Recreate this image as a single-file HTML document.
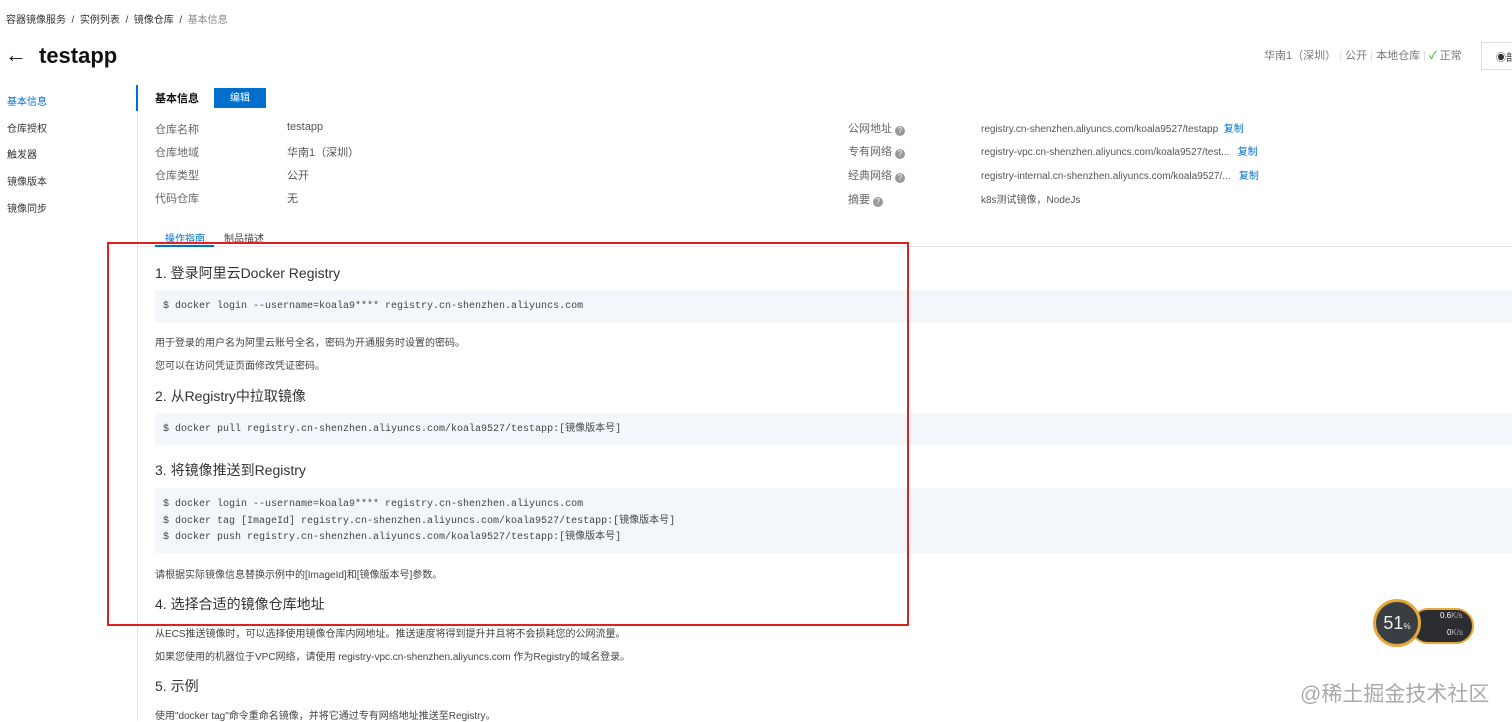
<!DOCTYPE html>
<html><head><meta charset="utf-8"><style>
*{margin:0;padding:0;box-sizing:border-box}
body{width:1512px;height:721px;overflow:hidden;background:#fff;font-family:"Liberation Sans","Noto Sans CJK SC",sans-serif;color:#333;position:relative}
.a{position:absolute;white-space:nowrap}
.g{font-size:11px;color:#555}
.h{font-size:14px;color:#333}
.code{position:absolute;left:155px;right:0;background:#f3f6fb;font-family:"Liberation Mono","Noto Sans CJK SC",monospace;font-size:10px;color:#444;padding-left:8px}
.q{display:inline-block;width:10px;height:10px;border-radius:50%;background:#999;color:#fff;font-size:8px;text-align:center;line-height:10px;vertical-align:-1px;margin-left:3px}
.cp{color:#0070cc}
</style></head><body>
<div class="a" style="left:6px;top:11px;font-size:10px;color:#333">容器镜像服务 &nbsp;/&nbsp; 实例列表 &nbsp;/&nbsp; 镜像仓库 &nbsp;/&nbsp; <span style="color:#888">基本信息</span></div>
<div class="a" style="left:5px;top:42px;font-size:22px;color:#111">←</div>
<div class="a" style="left:39px;top:43px;font-size:22px;font-weight:bold;color:#111">testapp</div>
<div class="a" style="left:1264px;top:47px;font-size:11px;color:#777">华南1（深圳） <span style="color:#ddd">|</span> 公开 <span style="color:#ddd">|</span> 本地仓库 <span style="color:#ddd">|</span> <span style="color:#2a2">✓</span> 正常</div>
<div class="a" style="left:1481px;top:42px;width:40px;height:28px;border:1px solid #ddd;font-size:10px;padding:6px 0 0 14px">◉部</div>
<div class="a" style="left:7px;top:93px;font-size:10px;color:#0070cc">基本信息</div>
<div class="a" style="left:7px;top:120px;font-size:10px">仓库授权</div>
<div class="a" style="left:7px;top:146px;font-size:10px">触发器</div>
<div class="a" style="left:7px;top:173px;font-size:10px">镜像版本</div>
<div class="a" style="left:7px;top:200px;font-size:10px">镜像同步</div>
<div class="a" style="left:137px;top:85px;width:1px;height:636px;background:#e5e5e5"></div>
<div class="a" style="left:136px;top:85px;width:2px;height:26px;background:#0070cc"></div>
<div class="a" style="left:155px;top:90px;font-size:11px;font-weight:bold;color:#111">基本信息</div>
<div class="a" style="left:214px;top:88px;width:52px;height:20px;background:#0070cc;color:#fff;font-size:10px;text-align:center;line-height:22px">编辑</div>
<div class="a g" style="left:155px;top:121px;color:#666">仓库名称</div><div class="a g" style="left:287px;top:121px">testapp</div>
<div class="a g" style="left:155px;top:144px;color:#666">仓库地域</div><div class="a g" style="left:287px;top:144px">华南1（深圳）</div>
<div class="a g" style="left:155px;top:167px;color:#666">仓库类型</div><div class="a g" style="left:287px;top:167px">公开</div>
<div class="a g" style="left:155px;top:190px;color:#666">代码仓库</div><div class="a g" style="left:287px;top:190px">无</div>
<div class="a g" style="left:848px;top:120px;color:#666">公网地址<span class="q">?</span></div><div class="a g" style="left:981px;top:120px;font-size:10px">registry.cn-shenzhen.aliyuncs.com/koala9527/testapp &nbsp;<span class="cp">复制</span></div>
<div class="a g" style="left:848px;top:143px;color:#666">专有网络<span class="q">?</span></div><div class="a g" style="left:981px;top:143px;font-size:10px">registry-vpc.cn-shenzhen.aliyuncs.com/koala9527/test... &nbsp;&nbsp;<span class="cp">复制</span></div>
<div class="a g" style="left:848px;top:167px;color:#666">经典网络<span class="q">?</span></div><div class="a g" style="left:981px;top:167px;font-size:10px">registry-internal.cn-shenzhen.aliyuncs.com/koala9527/... &nbsp;&nbsp;<span class="cp">复制</span></div>
<div class="a g" style="left:848px;top:191px;color:#666">摘要<span class="q">?</span></div><div class="a g" style="left:981px;top:191px;font-size:10px">k8s测试镜像，NodeJs</div>
<div class="a" style="left:165px;top:230px;font-size:10px;color:#0070cc">操作指南</div>
<div class="a" style="left:224px;top:230px;font-size:10px;color:#444">制品描述</div>
<div class="a" style="left:138px;top:246px;right:0;height:1px;background:#e5e5e5"></div>
<div class="a" style="left:155px;top:245px;width:59px;height:2px;background:#0070cc"></div>
<div class="a h" style="left:155px;top:263px">1. 登录阿里云Docker Registry</div>
<div class="code" style="top:290px;height:32px;line-height:34px">$ docker login --username=koala9**** registry.cn-shenzhen.aliyuncs.com</div>
<div class="a" style="left:155px;top:334px;font-size:10px;color:#444">用于登录的用户名为阿里云账号全名，密码为开通服务时设置的密码。</div>
<div class="a" style="left:155px;top:357px;font-size:10px;color:#444">您可以在访问凭证页面修改凭证密码。</div>
<div class="a h" style="left:155px;top:386px">2. 从Registry中拉取镜像</div>
<div class="code" style="top:413px;height:32px;line-height:34px">$ docker pull registry.cn-shenzhen.aliyuncs.com/koala9527/testapp:[镜像版本号]</div>
<div class="a h" style="left:155px;top:460px">3. 将镜像推送到Registry</div>
<div class="code" style="top:488px;height:65px;padding-top:9px;line-height:16.5px">$ docker login --username=koala9**** registry.cn-shenzhen.aliyuncs.com<br>$ docker tag [ImageId] registry.cn-shenzhen.aliyuncs.com/koala9527/testapp:[镜像版本号]<br>$ docker push registry.cn-shenzhen.aliyuncs.com/koala9527/testapp:[镜像版本号]</div>
<div class="a" style="left:155px;top:566px;font-size:10px;color:#444">请根据实际镜像信息替换示例中的[ImageId]和[镜像版本号]参数。</div>
<div class="a h" style="left:155px;top:594px">4. 选择合适的镜像仓库地址</div>
<div class="a" style="left:155px;top:625px;font-size:10px;color:#444">从ECS推送镜像时，可以选择使用镜像仓库内网地址。推送速度将得到提升并且将不会损耗您的公网流量。</div>
<div class="a" style="left:155px;top:648px;font-size:10px;color:#444">如果您使用的机器位于VPC网络，请使用 registry-vpc.cn-shenzhen.aliyuncs.com 作为Registry的域名登录。</div>
<div class="a h" style="left:155px;top:676px">5. 示例</div>
<div class="a" style="left:155px;top:707px;font-size:10px;color:#444">使用"docker tag"命令重命名镜像，并将它通过专有网络地址推送至Registry。</div>
<div class="a" style="left:107px;top:242px;width:802px;height:384px;border:2px solid #e02020"></div>
<div class="a" style="left:1410px;top:608px;width:64px;height:36px;border-radius:18px;background:#2b2d30;border:2px solid #e7a83a"></div>
<div class="a" style="left:1373px;top:599px;width:48px;height:48px;border-radius:50%;background:#3a3d42;border:3px solid #e7a83a;color:#eee;font-size:18px;text-align:center;line-height:42px">51<span style="font-size:8px">%</span></div>
<div class="a" style="left:1440px;top:611px;font-size:8px;color:#fff">0.6<span style="color:#aaa">K/s</span></div>
<div class="a" style="left:1447px;top:628px;font-size:8px;color:#fff">0<span style="color:#aaa">K/s</span></div>
<div class="a" style="left:1300px;top:678px;font-size:21px;color:#aaa">@稀土掘金技术社区</div>
</body></html>
